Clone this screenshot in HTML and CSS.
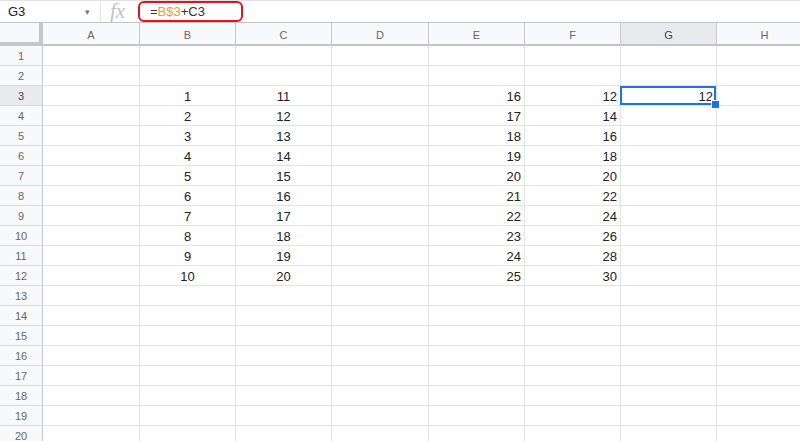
FILE: index.html
```html
<html>
<head>
    <title>Таблица</title>
    <meta http-equiv="Content-Type" content="text/html; charset=UTF-8"/>
    <link rel="stylesheet" href="styles.css">
</head>
<body>
<div class="fbar">
    <div class="namebox"><span>G3</span><span class="drop">&#9662;</span></div>
    <div class="fx">fx</div>
    <div class="formula">=<span class="ref">B$3</span>+C3</div>
</div>
<div class="sheet">
    <div class="row"><div class="corner"></div><div class="ch">A</div><div class="ch">B</div><div class="ch">C</div><div class="ch">D</div><div class="ch">E</div><div class="ch">F</div><div class="ch on">G</div><div class="ch">H</div></div>
    <div class="row"><div class="rh">1</div><div></div><div></div><div></div><div></div><div></div><div></div><div></div><div></div></div>
    <div class="row"><div class="rh">2</div><div></div><div></div><div></div><div></div><div></div><div></div><div></div><div></div></div>
    <div class="row"><div class="rh on">3</div><div></div><div class="c">1</div><div class="c">11</div><div></div><div class="r">16</div><div class="r">12</div><div class="r sel">12</div><div></div></div>
    <div class="row"><div class="rh">4</div><div></div><div class="c">2</div><div class="c">12</div><div></div><div class="r">17</div><div class="r">14</div><div></div><div></div></div>
    <div class="row"><div class="rh">5</div><div></div><div class="c">3</div><div class="c">13</div><div></div><div class="r">18</div><div class="r">16</div><div></div><div></div></div>
    <div class="row"><div class="rh">6</div><div></div><div class="c">4</div><div class="c">14</div><div></div><div class="r">19</div><div class="r">18</div><div></div><div></div></div>
    <div class="row"><div class="rh">7</div><div></div><div class="c">5</div><div class="c">15</div><div></div><div class="r">20</div><div class="r">20</div><div></div><div></div></div>
    <div class="row"><div class="rh">8</div><div></div><div class="c">6</div><div class="c">16</div><div></div><div class="r">21</div><div class="r">22</div><div></div><div></div></div>
    <div class="row"><div class="rh">9</div><div></div><div class="c">7</div><div class="c">17</div><div></div><div class="r">22</div><div class="r">24</div><div></div><div></div></div>
    <div class="row"><div class="rh">10</div><div></div><div class="c">8</div><div class="c">18</div><div></div><div class="r">23</div><div class="r">26</div><div></div><div></div></div>
    <div class="row"><div class="rh">11</div><div></div><div class="c">9</div><div class="c">19</div><div></div><div class="r">24</div><div class="r">28</div><div></div><div></div></div>
    <div class="row"><div class="rh">12</div><div></div><div class="c">10</div><div class="c">20</div><div></div><div class="r">25</div><div class="r">30</div><div></div><div></div></div>
    <div class="row"><div class="rh">13</div><div></div><div></div><div></div><div></div><div></div><div></div><div></div><div></div></div>
    <div class="row"><div class="rh">14</div><div></div><div></div><div></div><div></div><div></div><div></div><div></div><div></div></div>
    <div class="row"><div class="rh">15</div><div></div><div></div><div></div><div></div><div></div><div></div><div></div><div></div></div>
    <div class="row"><div class="rh">16</div><div></div><div></div><div></div><div></div><div></div><div></div><div></div><div></div></div>
    <div class="row"><div class="rh">17</div><div></div><div></div><div></div><div></div><div></div><div></div><div></div><div></div></div>
    <div class="row"><div class="rh">18</div><div></div><div></div><div></div><div></div><div></div><div></div><div></div><div></div></div>
    <div class="row"><div class="rh">19</div><div></div><div></div><div></div><div></div><div></div><div></div><div></div><div></div></div>
    <div class="row"><div class="rh">20</div><div></div><div></div><div></div><div></div><div></div><div></div><div></div><div></div></div>
</div>
</body>
</html>
```

FILE: styles.css
```css
* {
    box-sizing: border-box;
}

html, body {
    margin: 0px;
    background: #fff;
    color: #222;
    font-family: "Liberation Sans", Arial, sans-serif;
    overflow: hidden;
}

/* formula bar */
.fbar {
    height: 23px;
    border-top: 1px solid #e1e1e1;
    border-bottom: 1px solid #c4c4c4;
    display: flex;
    align-items: center;
}

.namebox {
    width: 101px;
    height: 100%;
    padding: 0 10px 0 8px;
    display: flex;
    align-items: center;
    justify-content: space-between;
    font-size: 13px;
    border-right: 1px solid #e4e4e4;
}

.drop {
    font-size: 9px;
    color: #777;
}

.fx {
    width: 37px;
    padding-left: 9px;
    font-family: "Liberation Serif", serif;
    font-style: italic;
    font-size: 21px;
    color: #c2c2c2;
    line-height: 21px;
}

.formula {
    width: 105px;
    height: 21px;
    padding-left: 10px;
    border: 2px solid #e3121b;
    border-radius: 6px;
    font-size: 13px;
    line-height: 18px;
    color: #333;
}

.ref {
    color: #f19b2c;
}

/* grid */
.sheet {
    display: grid;
    grid-template-columns: 43px 97px 96px 96px 97px 96px 96px 96px 96px;
    grid-template-rows: 23px;
    grid-auto-rows: 20px;
    width: 813px;
}

.row {
    display: contents;
}

.row > div {
    border-right: 1px solid #e2e3e3;
    border-bottom: 1px solid #e2e3e3;
    font-size: 13px;
    line-height: 21px;
    white-space: nowrap;
}

.row > .corner {
    background: #f8f9fa;
    border-right: 4px solid #c4c7c5;
    border-bottom: 4px solid #c4c7c5;
}

.row > .ch, .row > .rh {
    background: #f8f9fa;
    border-color: #c8c8c8;
    color: #666;
    font-size: 11px;
    text-align: center;
}

.row > .ch {
    line-height: 24px;
    border-bottom: 2px solid #c4c4c4;
}

.row > .rh {
    border-bottom-color: #dcdcdc;
}

.row > .on {
    background: #e8eaed;
    color: #444;
}

.c {
    text-align: center;
}

.r {
    text-align: right;
    padding-right: 3px;
}

/* selected cell */
.row > .sel {
    position: relative;
}

.sel:after {
    content: '';
    position: absolute;
    top: 0;
    left: -1px;
    right: 0;
    bottom: 0;
    border: 2px solid #1a73e8;
}

.sel:before {
    content: '';
    position: absolute;
    right: -4px;
    bottom: -4px;
    width: 7px;
    height: 7px;
    background: #1a73e8;
    border: 1px solid #fff;
    z-index: 1;
}
```
